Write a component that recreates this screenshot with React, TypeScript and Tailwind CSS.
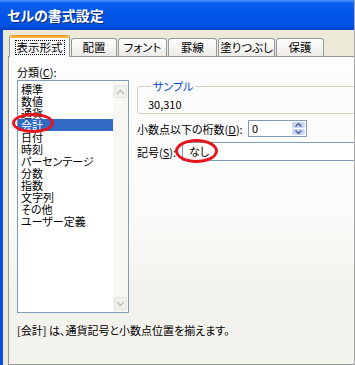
const categories = [
  "標準",
  "数値",
  "通貨",
  "会計",
  "日付",
  "時刻",
  "パーセンテージ",
  "分数",
  "指数",
  "文字列",
  "その他",
  "ユーザー定義",
];

const tabs = [
  { label: "配置", w: "w-[46px]" },
  { label: "フォント", w: "w-[49px]" },
  { label: "罫線", w: "w-[49px]" },
  { label: "塗りつぶし", w: "w-[57px]" },
  { label: "保護", w: "w-[48px]" },
];

function Chevron({ up }: { up?: boolean }) {
  return (
    <svg width="9" height="6" viewBox="0 0 9 6">
      <path
        d={up ? "M1 5 L4.5 1.5 L8 5" : "M1 1 L4.5 4.5 L8 1"}
        fill="none"
        stroke="#C4C3B9"
        strokeWidth="1.6"
      />
    </svg>
  );
}

function SpinArrows() {
  return (
    <div className="flex h-full w-[13px] flex-col gap-[1px] py-[1px]">
      <div className="flex flex-1 items-center justify-center rounded-[2px] bg-[#C6D6F7]">
        <svg width="7" height="4" viewBox="0 0 7 4">
          <path d="M0.5 3.5 L3.5 0.5 L6.5 3.5" fill="none" stroke="#4D6185" strokeWidth="1.4" />
        </svg>
      </div>
      <div className="flex flex-1 items-center justify-center rounded-[2px] bg-[#C6D6F7]">
        <svg width="7" height="4" viewBox="0 0 7 4">
          <path d="M0.5 0.5 L3.5 3.5 L6.5 0.5" fill="none" stroke="#4D6185" strokeWidth="1.4" />
        </svg>
      </div>
    </div>
  );
}

export default function App() {
  return (
    <div className="relative flex h-[365px] w-[355px] flex-col overflow-hidden border-r border-[#A8A8A8] font-['Noto_Sans_CJK_JP',sans-serif] text-[11px] text-black [font-feature-settings:'palt']">
      {/* title bar */}
      <div className="flex h-[30px] shrink-0 items-center bg-[linear-gradient(to_bottom,#4A95F7_0%,#0B62F0_10%,#0056E8_45%,#0052E2_85%,#0041C4_100%)] pl-[7px]">
        <span className="text-[14px] font-bold leading-none text-white [text-shadow:1px_1px_0_#0B2A7A]">
          セルの書式設定
        </span>
      </div>

      <div className="flex min-h-0 flex-1">
        <div className="w-[3px] shrink-0 bg-[#0A4CDE]" />
        <div className="flex min-w-0 flex-1 flex-col bg-[#ECE9D8] pl-[5px]">
          {/* tabs */}
          <div className="flex h-[26px] shrink-0 items-end gap-[1px] pl-[1px]">
            <div className="relative z-10 -mb-[1px] flex h-[22px] w-[61px] flex-col rounded-t-[3px] border-x border-[#919B9C] bg-[#FCFCFE]">
              <div className="h-[3px] rounded-t-[3px] bg-[linear-gradient(to_bottom,#E68B2C,#FFC73C)]" />
              <div className="flex flex-1 items-center justify-center">
                <span className="border border-dotted border-black px-[1px] text-[11.5px] leading-[13px]">表示形式</span>
              </div>
            </div>
            {tabs.map((t) => (
              <div
                key={t.label}
                className={`flex h-[18px] ${t.w} items-center justify-center rounded-t-[3px] border-x border-t border-[#919B9C] bg-[linear-gradient(to_bottom,#FFFFFF,#ECEBE6)] text-[11.5px] leading-none`}
              >
                {t.label}
              </div>
            ))}
          </div>

          {/* panel */}
          <div className="flex w-[420px] flex-1 flex-col border border-r-0 border-[#919B9C] bg-[linear-gradient(to_bottom,#FDFDFE_0%,#FAFAF8_55%,#F3F2EC_75%,#F3F2EC_100%)] pl-[8px] pt-[9px]">
            <div className="flex items-start gap-[8px]">
              {/* category list */}
              <div className="flex flex-col">
                <div className="mb-[1px] leading-[13px]">
                  分類(<span className="underline">C</span>):
                </div>
                <div className="flex h-[233px] w-[112px] border border-[#7F9DB9] bg-white">
                  <div className="flex flex-1 flex-col pt-[2px]">
                    {categories.map((c) => (
                      <div
                        key={c}
                        className={
                          c === "会計"
                            ? "h-[12px] bg-[#316AC5] pl-[3px] leading-[12px] text-white"
                            : "h-[12px] pl-[3px] leading-[12px]"
                        }
                      >
                        {c}
                      </div>
                    ))}
                  </div>
                  <div className="flex w-[15px] flex-col justify-between bg-[#F8F7F3] px-[1px] pb-[2px] pt-[4px]">
                    <div className="flex h-[13px] items-center justify-center rounded-[2px] border border-[#E4E3DB] bg-[#F1F0EA]">
                      <Chevron up />
                    </div>
                    <div className="flex h-[13px] items-center justify-center rounded-[2px] border border-[#E4E3DB] bg-[#F1F0EA]">
                      <Chevron />
                    </div>
                  </div>
                </div>
              </div>

              {/* right side */}
              <div className="mt-[14px] flex w-[260px] flex-col">
                <fieldset className="rounded-[3px] border border-[#D0D0BF] pb-[3px] pl-[10px] pt-[6px]">
                  <legend className="ml-[3px] px-[2px] leading-[12px] text-[#0046D5]">サンプル</legend>
                  <div className="leading-[12px]">30,310</div>
                </fieldset>

                <div className="mt-[6px] flex items-center">
                  <div className="w-[111px] leading-[12px]">
                    小数点以下の桁数(<span className="underline">D</span>):
                  </div>
                  <div className="flex h-[17px] w-[59px] items-center border border-[#7F9DB9] bg-white pl-[3px] pr-[1px]">
                    <span className="flex-1 leading-none">0</span>
                    <SpinArrows />
                  </div>
                </div>

                <div className="mt-[5px] flex items-center">
                  <div className="w-[45px] leading-[12px]">
                    記号(<span className="underline">S</span>):
                  </div>
                  <div className="flex h-[19px] flex-1 items-center border border-[#7F9DB9] bg-white pl-[6px]">
                    なし
                  </div>
                </div>
              </div>
            </div>

            <div className="mt-[11px] leading-[12px]">[会計] は、通貨記号と小数点位置を揃えます。</div>
          </div>
        </div>
      </div>

      {/* red annotation circles */}
      <div className="absolute left-[12px] top-[113px] h-[20px] w-[42px] rounded-[50%] border-[3px] border-[#E8141C]" />
      <div className="absolute left-[175px] top-[139px] h-[24px] w-[43px] rounded-[50%] border-[3px] border-[#E8141C]" />
    </div>
  );
}
